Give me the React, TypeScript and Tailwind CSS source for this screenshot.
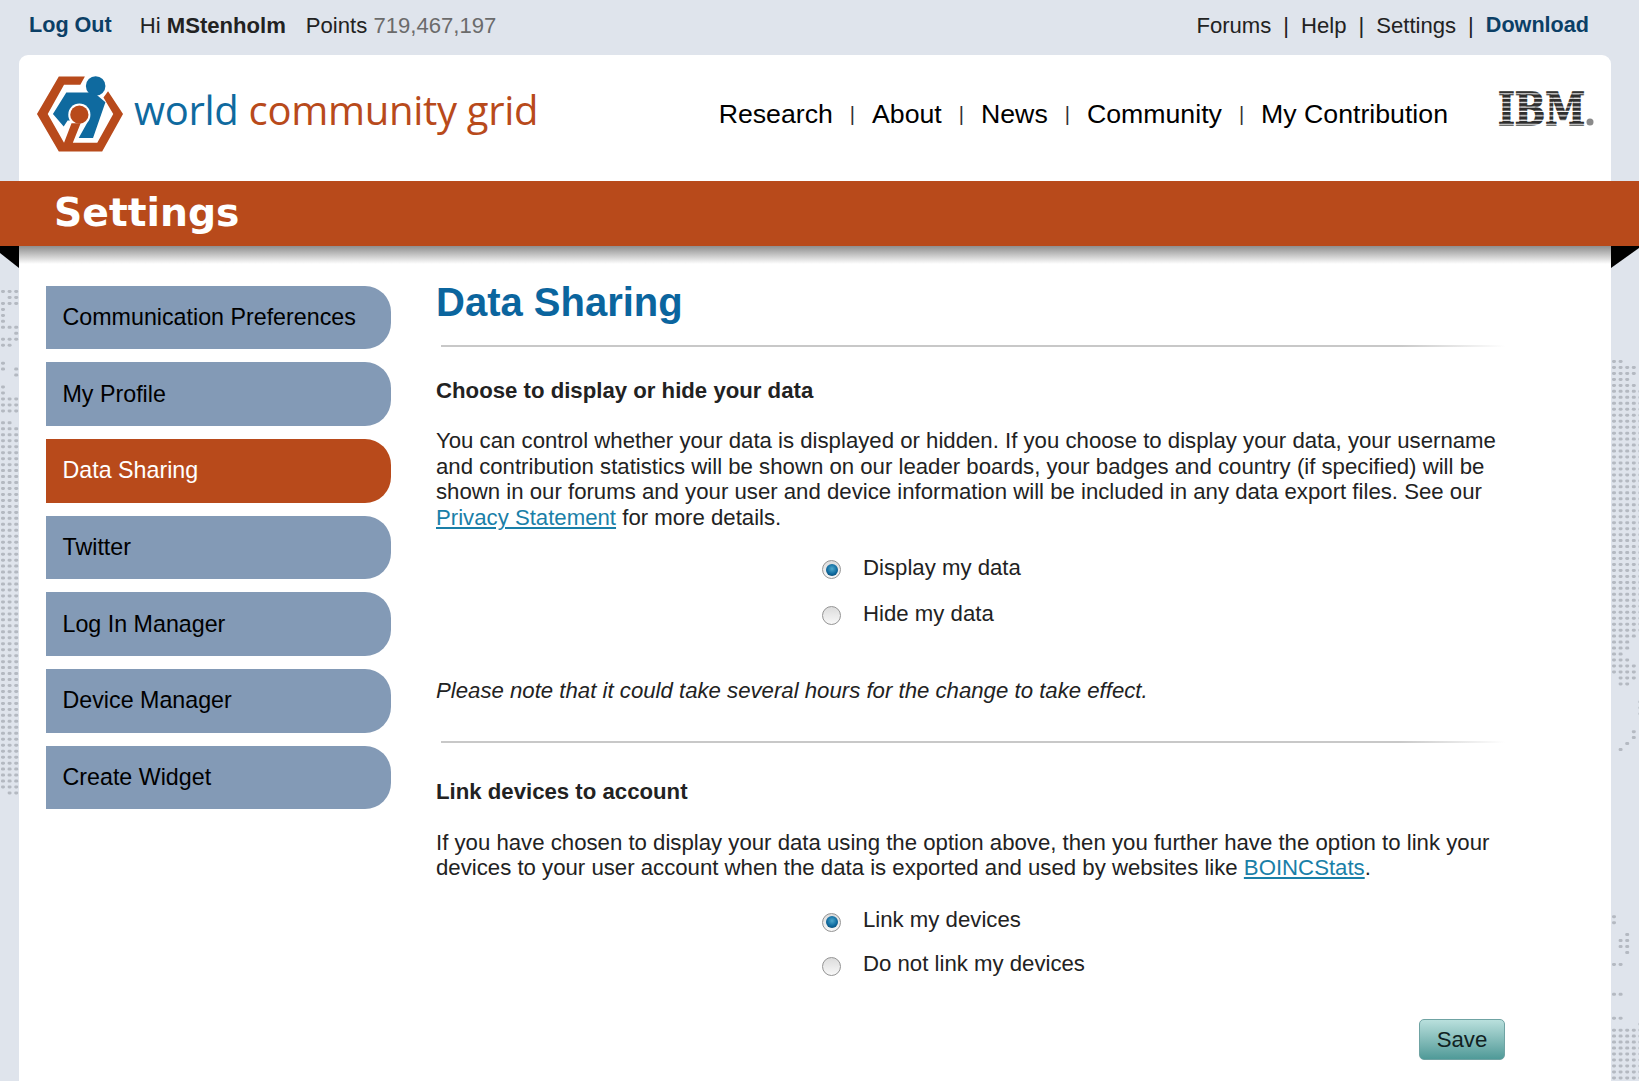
const SANS = "font-['Liberation_Sans',Arial,sans-serif]"

const sideNav = [
  "Communication Preferences",
  "My Profile",
  "Data Sharing",
  "Twitter",
  "Log In Manager",
  "Device Manager",
  "Create Widget",
]

const mainNav = ["Research", "About", "News", "Community", "My Contribution"]

// [row, columns] pairs for the dotted world map that shows beside the card
const leftDots: Array<[number, number[]]> = [
  [0, [0, 1, 2]], [1, [1, 2]], [2, [0, 1, 2]], [3, [0]], [4, [0]], [5, [0]], [6, [0, 1, 2]], [7, [2]],
  [8, [0, 1, 2]], [9, [0, 1]], [12, [0]], [13, [0, 2]], [14, [2]], [16, [0]], [17, [0]],
  [18, [0, 1, 2]], [19, [0, 1, 2]], [20, [0, 1, 2]], [22, [0, 1]],
  ...Array.from({ length: 61 }, (_, i): [number, number[]] => [i + 23, [0, 1, 2]]),
  [84, [1, 2]],
]

const rightDots: Array<[number, number[]]> = [
  [0, [0, 1]], [1, [0, 1, 2, 3]], [2, [0, 1, 2, 3]], [3, [0, 1, 2]], [4, [0, 1, 2, 3]],
  ...Array.from({ length: 41 }, (_, i): [number, number[]] => [i + 5, [0, 1, 2, 3, 4]]),
  [46, [0, 1, 2, 3]], [47, [0, 1, 2]], [48, [0, 1, 2]], [49, [0, 1]], [50, [0, 1, 2]],
  [51, [0, 1, 2, 3]], [52, [0, 1, 2, 3]], [53, [1, 2, 3]], [54, [1, 2]],
  [57, [4]], [58, [4]], [59, [4]], [62, [3]], [63, [3]], [64, [2]], [65, [1]],
  [93, [0]], [94, [0]], [96, [2]], [97, [1, 2]], [98, [1, 2]], [99, [2]], [101, [0, 1]], [106, [0, 1]],
  [110, [0, 1]], [111, [4]],
  ...Array.from({ length: 16 }, (_, i): [number, number[]] => [i + 112, [0, 1, 2, 3, 4]]),
]

function DotMap({ dots, width, top, className }: { dots: Array<[number, number[]]>; width: number; top: number; className: string }) {
  return (
    <svg className={className} width={width} height={1081} viewBox={`0 0 ${width} 1081`}>
      {dots.flatMap(([row, cols]) =>
        cols.map((col) => (
          <rect key={`${row}-${col}`} x={col * 6.6 + 1} y={top + row * 5.97} width={4} height={3} rx={1.4} fill="#b4b9c1" />
        ))
      )}
    </svg>
  )
}

function WcgMark() {
  return (
    <svg width="88" height="78" viewBox="15 30 270 236" className="shrink-0">
      <circle cx="198" cy="62" r="30" fill="#0f6a9f" />
      <path d="M108 82H176L200 88L228 112L190 222H146L176 168H112L100 186L67 148Z" fill="#0f6a9f" />
      <circle cx="148" cy="150" r="34" fill="#fff" />
      <path d="M118 170L92 236H136L168 170Z" fill="#fff" />
      <path
        d="M85 33H165L151 58H101L51 148L101 236L124 176H152L128 236H203L252 148L222 97L236 78L282 148L218 263H85L18 148Z"
        fill="#b84a1b"
      />
      <circle cx="148" cy="150" r="28" fill="#b84a1b" />
    </svg>
  )
}

function IbmLogo() {
  return (
    <svg width="96" height="38" viewBox="0 0 96 38" className="overflow-visible">
      <defs>
        <pattern id="ibm-stripes" width="96" height="4.4" patternUnits="userSpaceOnUse">
          <rect width="96" height="3.2" fill="#2e2e2e" />
        </pattern>
      </defs>
      <text
        x="0"
        y="35"
        textLength="87"
        lengthAdjust="spacingAndGlyphs"
        fontFamily="'DejaVu Serif', serif"
        fontWeight="700"
        fontSize="44"
        fill="url(#ibm-stripes)"
        stroke="url(#ibm-stripes)"
        strokeWidth="1.4"
      >
        IBM
      </text>
      <circle cx="92" cy="32" r="3.5" fill="#8a8a8a" />
    </svg>
  )
}

function Radio({ label, checked }: { label: string; checked?: boolean }) {
  return (
    <div className="flex h-[26px] items-center pl-[386px]">
      <span className="relative top-[2px] flex h-[19px] w-[19px] items-center justify-center rounded-full border border-[#949494] bg-gradient-to-b from-[#dcdcdc] to-[#f8f8f8]">
        {checked && (
          <span className="h-[12px] w-[12px] rounded-full bg-[radial-gradient(circle_at_50%_40%,#4fa9cc,#0f6a9f_55%,#0b3a58)]" />
        )}
      </span>
      <span className="ml-[22px] text-[22.2px] text-[#222]">{label}</span>
    </div>
  )
}

function Divider({ className }: { className: string }) {
  return <div className={`ml-[5px] h-[2px] w-[1064px] bg-gradient-to-r from-[#c8c8c8] via-[#c8c8c8] via-90% to-white ${className}`} />
}

export default function App() {
  return (
    <div className={`relative h-[1081px] w-full overflow-hidden bg-[#dfe4ec] ${SANS}`}>
      <DotMap dots={leftDots} width={19} top={290} className="absolute left-0 top-0" />
      <DotMap dots={rightDots} width={28} top={360} className="absolute right-0 top-0" />

      {/* Top strip */}
      <div className="flex h-[51px] items-center justify-between pl-[29px] pr-[50px] text-[22.1px] text-[#222]">
        <div className="flex items-center">
          <a className="text-[21.6px] font-bold text-[#0b3f66]">Log Out</a>
          <span className="ml-[28px]">
            Hi <b>MStenholm</b>
          </span>
          <span className="ml-[20px]">
            Points <span className="text-[#6b6b6b]">719,467,197</span>
          </span>
        </div>
        <div className="flex items-center gap-[12px]">
          <a>Forums</a>
          <span>|</span>
          <a>Help</a>
          <span>|</span>
          <a>Settings</a>
          <span>|</span>
          <a className="text-[21.6px] font-bold text-[#0b3f66]">Download</a>
        </div>
      </div>

      {/* White card */}
      <div className="relative ml-[19px] mt-[4px] h-[1026px] w-[1592px] rounded-t-[9px] bg-white">
        <div className="flex h-[126px] items-start justify-between pl-[17px] pr-[17px] pt-[20px]">
          <div className="flex items-center">
            <WcgMark />
            <span className="relative top-[-4px] ml-[10px] whitespace-nowrap font-['Open_Sans',sans-serif] text-[40px] font-medium leading-[60px] tracking-[-0.3px] text-[#0f6a9f]">
              world <span className="text-[#b84a1b]">community grid</span>
            </span>
          </div>
          <div className="flex items-start">
            <nav className="mr-[50px] mt-[19px] flex items-center text-[26.7px] text-black">
              {mainNav.map((item, index) => (
                <span key={item} className="flex items-center">
                  {index > 0 && <span className="mx-[17px] text-[20px] text-[#333]">|</span>}
                  {item}
                </span>
              ))}
            </nav>
            <div className="mt-[15px]">
              <IbmLogo />
            </div>
          </div>
        </div>

        {/* Settings ribbon */}
        <div className="relative z-10 -ml-[19px] flex h-[65px] w-[1639px] items-center bg-[#b84a1b] pl-[54px] font-['DejaVu_Sans',sans-serif] text-[39.3px] font-bold text-white">
          Settings
        </div>
        <svg className="absolute -left-[19px] top-[191px]" width="19" height="22" viewBox="0 0 19 22">
          <path d="M0 0H19V22L0 7Z" fill="#000" />
        </svg>
        <svg className="absolute left-[1592px] top-[191px]" width="28" height="22" viewBox="0 0 28 22">
          <path d="M0 0H28V2L0 22Z" fill="#000" />
        </svg>
        <div className="h-[18px] bg-gradient-to-b from-[#8f8f8f] to-white" />

        <div className="flex pl-[27px] pt-[21.5px]">
          <nav className="flex w-[345px] flex-col gap-[13px]">
            {sideNav.map((item) => (
              <a
                key={item}
                className={`flex h-[63.7px] items-center rounded-r-[26px] pl-[16.5px] text-[23.25px] ${
                  item === "Data Sharing" ? "bg-[#b84a1b] text-white" : "bg-[#839ab6] text-black"
                }`}
              >
                {item}
              </a>
            ))}
          </nav>

          <div className="ml-[45px] w-[1069px] pt-[0.5px] text-[22.2px] leading-[25.8px] text-[#222]">
            <h1 className="-mt-[7px] text-[40px] font-bold leading-[46px] text-[#0b659e]">Data Sharing</h1>
            <Divider className="mt-[20px]" />
            <h2 className="mt-[31px] font-bold">Choose to display or hide your data</h2>
            <p className="mt-[24px]">
              You can control whether your data is displayed or hidden. If you choose to display your data, your username
              and contribution statistics will be shown on our leader boards, your badges and country (if specified) will be
              shown in our forums and your user and device information will be included in any data export files. See our{" "}
              <a className="text-[#1a7fa8] underline">Privacy Statement</a> for more details.
            </p>
            <div className="mt-[24px] flex flex-col gap-[20px]">
              <Radio label="Display my data" checked />
              <Radio label="Hide my data" />
            </div>
            <p className="mt-[51px] italic">Please note that it could take several hours for the change to take effect.</p>
            <Divider className="mt-[37px]" />
            <h2 className="mt-[36px] font-bold">Link devices to account</h2>
            <p className="mt-[25px]">
              If you have chosen to display your data using the option above, then you further have the option to link your
              devices to your user account when the data is exported and used by websites like{" "}
              <a className="text-[#1a7fa8] underline">BOINCStats</a>.
            </p>
            <div className="mt-[26px] flex flex-col gap-[18px]">
              <Radio label="Link my devices" checked />
              <Radio label="Do not link my devices" />
            </div>
            <div className="mt-[42px] flex justify-end">
              <button className="h-[41px] w-[86px] rounded-[5px] border border-[#6fa3a3] bg-gradient-to-b from-[#b9e0dd] to-[#4f9a98] text-[22.2px] text-[#122]">
                Save
              </button>
            </div>
          </div>
        </div>
      </div>
    </div>
  )
}
